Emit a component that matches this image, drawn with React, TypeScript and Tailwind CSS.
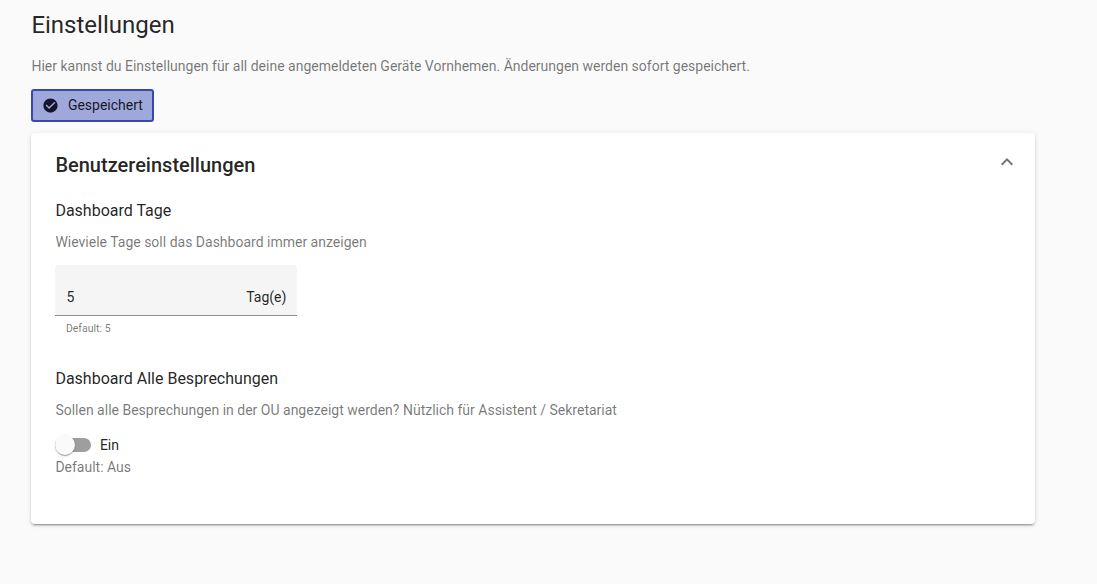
import React from 'react';

const App: React.FC = () => {
  return (
    <div className="min-h-[584px] bg-[#fafafa] pl-[31.4px] pr-[62px] pt-[9px] font-['Roboto',sans-serif] text-[14px] leading-[20px] text-[rgba(0,0,0,0.87)]">
      <h1 className="text-[24px] leading-[32px] font-normal">Einstellungen</h1>

      <p className="mt-[15px] text-[rgba(0,0,0,0.54)]">
        Hier kannst du Einstellungen für all deine angemeldeten Geräte Vornhemen. Änderungen werden sofort gespeichert.
      </p>

      <div className="mt-[13px] flex h-[33px] w-[123px] items-center gap-[9px] rounded-[3px] border-2 border-[#3949ab] bg-[#9fa8da] pb-[1px] pl-[8.5px]">
        <svg className="mt-[1px] h-[17px] w-[17px]" viewBox="0 0 24 24" fill="#14142b">
          <path d="M12 2C6.48 2 2 6.48 2 12s4.48 10 10 10 10-4.48 10-10S17.52 2 12 2zm-2 15l-5-5 1.41-1.41L10 14.17l7.59-7.59L19 8l-9 9z" />
        </svg>
        <span>Gespeichert</span>
      </div>

      {/* Benutzereinstellungen */}
      <section className="mt-[11px] h-[391px] rounded-[4px] bg-white px-[24px] pt-[19px] shadow-[0_3px_1px_-2px_rgba(0,0,0,0.2),0_2px_2px_0_rgba(0,0,0,0.14),0_1px_5px_0_rgba(0,0,0,0.12)]">
        <div className="flex items-center justify-between">
          <h2 className="text-[20px] leading-[26px] font-medium">Benutzereinstellungen</h2>
          <svg className="mr-[-8px] mt-[-6px] h-[24px] w-[24px]" viewBox="0 0 24 24" fill="rgba(0,0,0,0.54)">
            <path d="M7.41 15.41L12 10.83l4.59 4.58L18 14l-6-6-6 6z" />
          </svg>
        </div>

        <h3 className="mt-[21px] text-[16px] leading-[24px] font-normal">Dashboard Tage</h3>
        <p className="mt-[9px] text-[rgba(0,0,0,0.54)]">Wieviele Tage soll das Dashboard immer anzeigen</p>

        <div className="mt-[13px] w-[242px]">
          <div className="flex h-[51px] items-end justify-between rounded-t-[4px] border-b border-[rgba(0,0,0,0.42)] bg-[#f5f5f5] px-[11px] pb-[8px]">
            <span>5</span>
            <span>Tag(e)</span>
          </div>
          <div className="mt-[5px] pl-[10.5px] text-[10.5px] leading-[16px] text-[rgba(0,0,0,0.54)]">Default: 5</div>
        </div>

        <h3 className="mt-[30px] text-[16px] leading-[24px] font-normal">Dashboard Alle Besprechungen</h3>
        <p className="mt-[9px] text-[rgba(0,0,0,0.54)]">
          Sollen alle Besprechungen in der OU angezeigt werden? Nützlich für Assistent / Sekretariat
        </p>

        <div className="mt-[15px] flex h-[20px] items-center">
          <div className="relative h-[14px] w-[36px] rounded-full bg-[rgba(0,0,0,0.38)]">
            <div className="absolute left-0 top-[-3px] h-[20px] w-[20px] rounded-full bg-[#fafafa] shadow-[0_2px_1px_-1px_rgba(0,0,0,0.2),0_1px_1px_0_rgba(0,0,0,0.14),0_1px_3px_0_rgba(0,0,0,0.12)]" />
          </div>
          <span className="mb-[1px] ml-[8.5px]">Ein</span>
        </div>
        <div className="mt-[2px] text-[rgba(0,0,0,0.54)]">Default: Aus</div>
      </section>
    </div>
  );
};

export default App;
